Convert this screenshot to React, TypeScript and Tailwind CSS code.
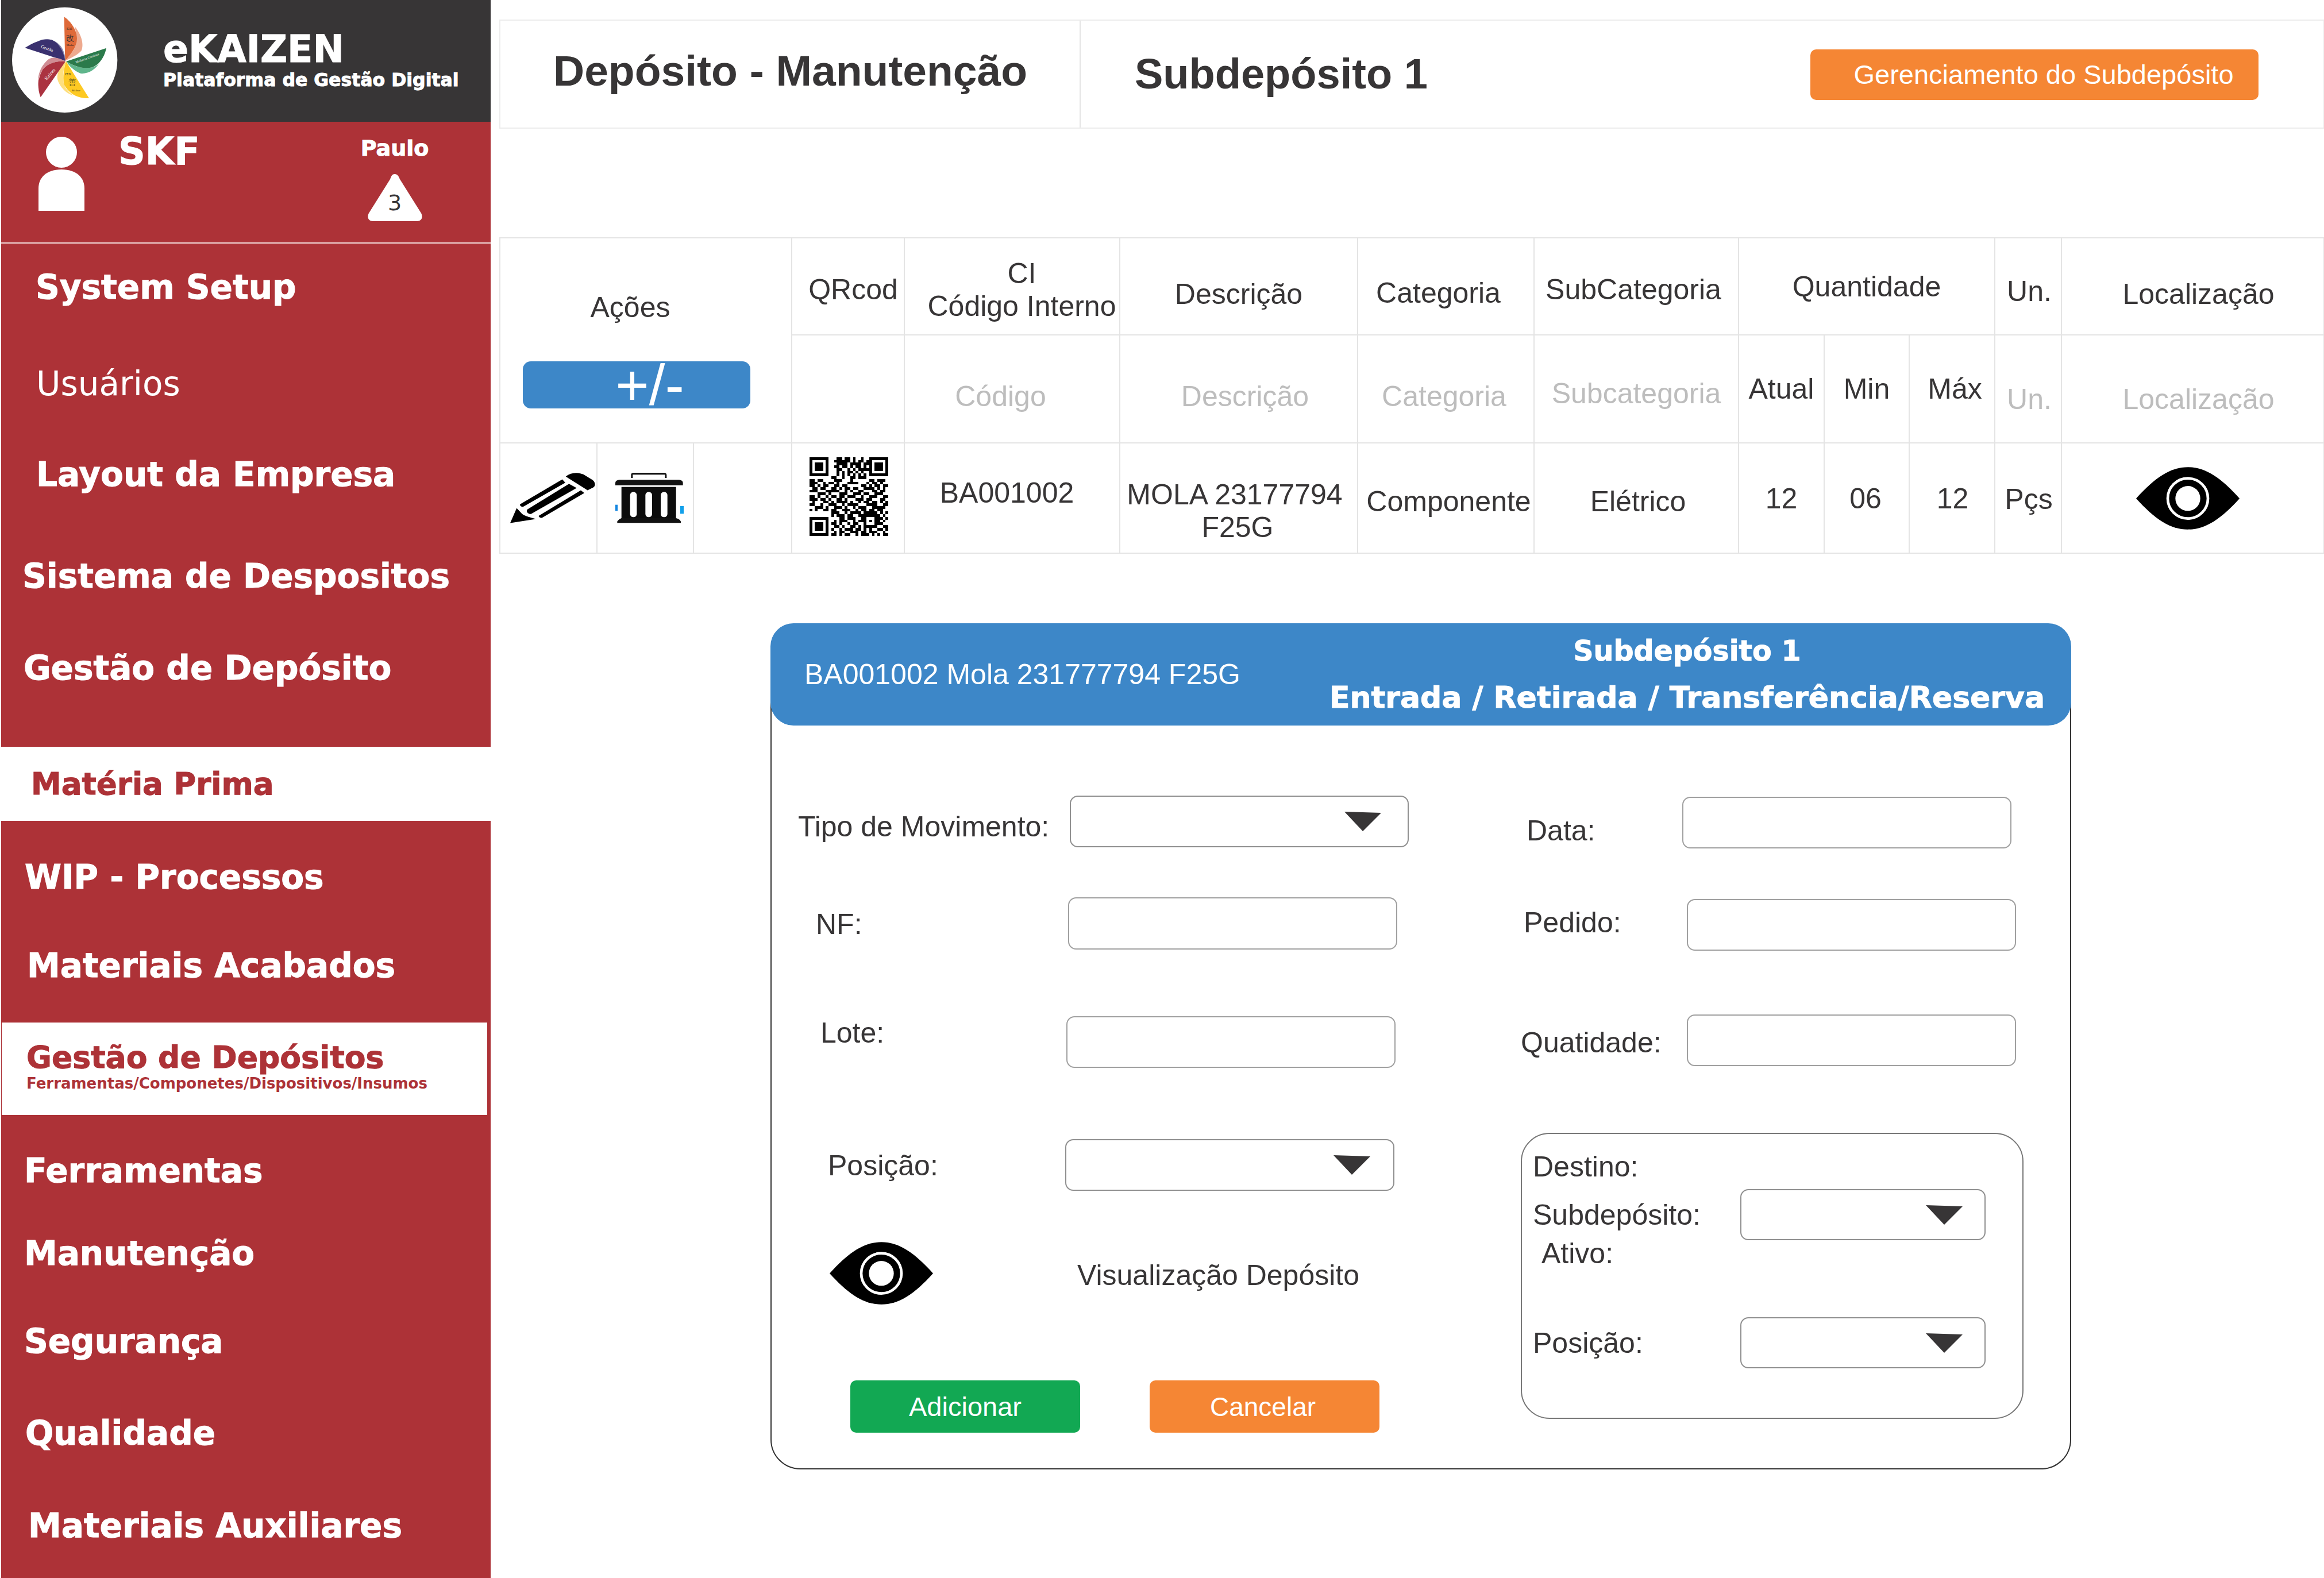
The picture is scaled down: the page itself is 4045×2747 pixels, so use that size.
import React from 'react';

const QR = [
  '00000000001101101001001000000',
  '00000000011111101011010000000',
  '00000000001111011110110000000',
  '00000000011011010110100000000',
  '00000000001100101011110000000',
  '00000000001010110101000000000',
  '00000000001010101010100000000',
  '00000000110010011011100000000',
  '11011000011100010000001101110',
  '11100101101000111100010110100',
  '11010110011011000001101011011',
  '01101100110101101100111101010',
  '11100011111001010011000110110',
  '00011101000111001110110011100',
  '11010010110110111001001110011',
  '11101101001101000111011000110',
  '01000110101111010010110110101',
  '11001001110010111100011110011',
  '00111010011101001011100111110',
  '10100110110011100101101101100',
  '00000000111001011110111110101',
  '00000000101110110011111111010',
  '00000000000110111001100011101',
  '00000000010111001011101011010',
  '00000000110100101100100011100',
  '00000000011010011010111110011',
  '00000000100101110110101001101',
  '00000000010110011101101110010',
  '00000000110101100101110101011',
];

const Finder = ({ x, y }: { x: number; y: number }) => (
  <g>
    <rect x={x} y={y} width={7} height={7} fill="#000" />
    <rect x={x + 1} y={y + 1} width={5} height={5} fill="#fff" />
    <rect x={x + 2} y={y + 2} width={3} height={3} fill="#000" />
  </g>
);

const QrCode = () => (
  <svg viewBox="0 0 29 29" className="w-[137px] h-[137px]" shapeRendering="crispEdges">
    <rect width={29} height={29} fill="#fff" />
    {QR.map((row, y) =>
      row.split('').map((c, x) => (c === '1' ? <rect key={`${x}-${y}`} x={x} y={y} width={1} height={1} fill="#000" /> : null)),
    )}
    <Finder x={0} y={0} />
    <Finder x={22} y={0} />
    <Finder x={0} y={22} />
  </svg>
);

const Logo = () => (
  <svg viewBox="0 0 630 630" className="ml-[8px] w-[210px] h-[210px] shrink-0">
    <circle cx={308} cy={310} r={275} fill="#fff" />
    <path d="M360 135C395 175 410 230 395 262C375 285 340 300 310 315C340 280 370 250 372 190Z" fill="#eeaa8f" />
    <path d="M305 85C350 115 375 170 372 200C370 250 330 290 310 315Z" fill="#df6a39" />
    <path d="M170 212C210 190 270 205 295 250C310 280 312 300 310 315C300 270 270 215 170 212Z" fill="#8a87ad" />
    <path d="M100 247C150 215 200 195 240 205C285 225 305 280 310 315Z" fill="#3a316f" />
    <path d="M495 315C470 365 425 385 390 380C360 370 330 340 315 318C350 340 395 355 430 352C465 350 485 335 495 315Z" fill="#5fb58b" />
    <path d="M525 248C515 300 480 350 430 352C390 355 345 335 315 318Z" fill="#2b7a4b" />
    <path d="M355 495C320 490 280 450 270 410C265 370 295 335 315 318C300 360 295 400 305 440C315 465 335 485 355 495Z" fill="#fedf7e" />
    <path d="M435 510C390 510 340 500 305 440C295 400 305 350 315 318Z" fill="#fdc923" />
    <path d="M172 455C160 400 180 340 225 305C255 290 290 305 312 318C280 315 220 320 190 365C170 395 168 425 172 455Z" fill="#d08d94" />
    <path d="M182 505C165 460 165 410 190 365C220 320 280 315 312 318Z" fill="#ab3340" />
    <g className="font-['Liberation_Serif',serif] [-webkit-text-stroke:0]">
      <text x={318} y={154} fontSize={16} fill="#222">KAI</text>
      <text x={316} y={210} fontSize={42} fill="#333" fontWeight={400}>改</text>
      <text x={317} y={237} fontSize={15} fill="#222">Mudar</text>
      <text x={182} y={246} fontSize={24} fill="#fff" transform="rotate(20 182 246)">Gestão</text>
      <text x={367} y={328} fontSize={17} fill="#fff" transform="rotate(-20 367 328)">Melhoria Contínua</text>
      <text x={308} y={389} fontSize={16} fill="#222">ZEN</text>
      <text x={326} y={440} fontSize={42} fill="#6b5a1a">善</text>
      <text x={345} y={473} fontSize={15} fill="#222">Melhor</text>
      <text x={214} y={417} fontSize={25} fill="#fff" transform="rotate(-50 214 417)">Kaizen</text>
    </g>
  </svg>
);

const UserIcon = () => (
  <svg viewBox="0 0 82 130" className="w-[82px] h-[130px] shrink-0" fill="#fff">
    <ellipse cx={41} cy={27} rx={27} ry={27} />
    <path d="M1 129V90C1 72 14 57 41 57C68 57 81 72 81 90V129Z" />
  </svg>
);

const Pencil = () => (
  <svg viewBox="25 115 450 275" className="w-[150px] h-[92px]" fill="#000">
    <path d="M318 140C345 118 385 115 415 132L458 158C474 170 474 190 462 197L432 212Z" />
    <path d="M300 155L316 172L98 297C88 302 76 292 80 285Z" />
    <path d="M335 178L375 200L138 335C122 340 108 322 118 312Z" />
    <path d="M397 212L415 226L195 355C184 358 174 350 178 345Z" />
    <path d="M62 305L85 330C95 342 110 348 162 362L28 383Z" />
  </svg>
);

const Trash = () => (
  <svg viewBox="570 115 360 270" className="w-[120px] h-[90px]">
    <path d="M655 145V128C655 122 660 118 668 118H828C836 118 841 122 841 130V145H832V128H664V145Z" fill="#111" />
    <path d="M573 172C573 160 585 155 600 155H900C915 155 926 160 926 172V183H573Z" fill="#111" />
    <rect x={605} y={192} width={285} height={165} fill="#0c0c0c" />
    <path d="M583 372C590 362 600 357 605 355H890C900 357 910 362 915 372V380H583Z" fill="#111" />
    <rect x={650} y={218} width={35} height={132} rx={17} fill="#fff" />
    <rect x={730} y={218} width={35} height={132} rx={17} fill="#fff" />
    <rect x={810} y={218} width={35} height={132} rx={17} fill="#fff" />
    <rect x={573} y={285} width={12} height={32} fill="#1486e0" />
    <rect x={912} y={292} width={18} height={40} fill="#12a0ea" />
  </svg>
);

const Eye = () => (
  <svg viewBox="72 65 540 325" className="w-[180px] h-[111px] shrink-0">
    <path d="M72 228C170 120 250 65 342 65C434 65 514 120 612 228C514 336 434 390 342 390C250 390 170 336 72 228Z" fill="#000" />
    <circle cx={342} cy={228} r={105} fill="none" stroke="#fff" strokeWidth={14} />
    <circle cx={342} cy={228} r={65} fill="#fff" />
  </svg>
);

const Cell = ({ className = '', children }: { className?: string; children?: React.ReactNode }) => (
  <div className={`flex items-center justify-center text-center whitespace-nowrap border-r-2 border-b-2 border-[#e4e4e4] ${className}`}>
    {children}
  </div>
);

const Select = ({ className = 'pr-[38px]' }: { className?: string }) => (
  <div className={`h-full w-full rounded-[14px] border-2 border-[#8f8f8f] flex items-center justify-end ${className}`}>
    <svg viewBox="0 0 64 34" className="w-[64px] h-[34px]">
      <polygon points="0,0 64,2 32,34" fill="#373536" />
    </svg>
  </div>
);

const Input = () => <div className="h-full w-full rounded-[14px] border-2 border-[#a0a0a0]" />;

const NavItem = ({ className, children }: { className: string; children: React.ReactNode }) => (
  <div className={`flex items-center font-bold text-[58px] text-white whitespace-nowrap ${className}`}>{children}</div>
);

const Sidebar = () => (
  <aside className="ml-[2px] w-[852px] h-full shrink-0 flex flex-col bg-[#ad3237] font-['DejaVu_Sans',sans-serif] [-webkit-text-stroke:1px_currentColor]">
    <div className="h-[212px] bg-[#373536] flex items-center text-white whitespace-nowrap">
      <Logo />
      <div className="ml-[64px] flex flex-col font-bold">
        <span className="text-[65px] leading-[72px] -mt-[4px]">eKAIZEN</span>
        <span className="text-[31.5px] leading-[40px] -mt-[3px]">Plataforma de Gestão Digital</span>
      </div>
    </div>
    <div className="h-[212px] flex text-white border-b-2 border-[#f3dcdc]">
      <div className="ml-[64px] mt-[26px]">
        <UserIcon />
      </div>
      <div className="ml-[58px] mt-[12px] text-[65px] leading-[80px] font-bold w-[423px]">SKF</div>
      <div className="flex flex-col items-center mt-[23px] w-[116px]">
        <span className="text-[38px] leading-[46px] font-bold">Paulo</span>
        <div className="relative mt-[22px] w-[95px] h-[82px]">
          <svg viewBox="0 0 95 82" className="w-[95px] h-[82px]">
            <path d="M47 0C52 0 54 4 56 9L93 68C97 76 93 82 86 82H9C2 82 -2 76 2 68L39 9C41 4 42 0 47 0Z" fill="#fff" />
          </svg>
          <span className="absolute inset-x-0 top-[25px] text-center text-[38px] leading-[50px] text-[#373536] [-webkit-text-stroke:0]">3</span>
        </div>
      </div>
    </div>
    <NavItem className="h-[152px] pl-[60px]">System Setup</NavItem>
    <NavItem className="h-[184px] pl-[61px] !font-normal [-webkit-text-stroke:0]">Usuários</NavItem>
    <NavItem className="h-[132px] pl-[61px]">Layout da Empresa</NavItem>
    <NavItem className="h-[222px] pl-[37px]">Sistema de Despositos</NavItem>
    <NavItem className="h-[98px] pl-[39px]">Gestão de Depósito</NavItem>
    <div className="h-[88px]" />
    <div className="h-[129px] bg-white flex items-center pl-[52px] text-[53px] font-bold text-[#ad3237]">Matéria Prima</div>
    <NavItem className="h-[196px] pl-[41px]">WIP - Processos</NavItem>
    <NavItem className="h-[112px] pl-[45px]">Materiais Acabados</NavItem>
    <div className="h-[43px]" />
    <div className="h-[161px] mr-[6px] ml-[1px] bg-white pl-[43px] pt-[28px] text-[#ad3237] font-bold whitespace-nowrap">
      <div className="text-[53.5px] leading-[66px]">Gestão de Depósitos</div>
      <div className="text-[26px] leading-[30px] -mt-[3px] [-webkit-text-stroke:0]">Ferramentas/Componetes/Dispositivos/Insumos</div>
    </div>
    <NavItem className="h-[194px] pl-[40px]">Ferramentas</NavItem>
    <NavItem className="h-[94px] pl-[40px]">Manutenção</NavItem>
    <NavItem className="h-[212px] pl-[40px]">Segurança</NavItem>
    <NavItem className="h-[108px] pl-[42px]">Qualidade</NavItem>
    <NavItem className="h-[196px] pl-[47px] pt-[18px]">Materiais Auxiliares</NavItem>
  </aside>
);

const TopBar = () => (
  <div className="mt-[34px] h-[190px] flex border-2 border-[#ececec] text-[75px] font-bold whitespace-nowrap">
    <div className="w-[1010px] h-full pl-[92px] flex items-center pb-[12px] border-r-2 border-[#e4e4e4]">Depósito - Manutenção</div>
    <div className="flex-1 flex items-center">
      <span className="ml-[94px] text-[74px]">Subdepósito 1</span>
      <button className="ml-auto mr-[113px] mt-[2px] w-[780px] h-[88px] rounded-[10px] bg-[#f58634] text-white text-[47px] font-normal pl-[32px]">
        Gerenciamento do Subdepósito
      </button>
    </div>
  </div>
);

const DataTable = () => (
  <div className="mt-[189px] grid grid-cols-[508px_196px_375px_414px_307px_356px_149px_148px_149px_116px_457px] grid-rows-[169px_188px_192px] border-t-2 border-l-2 border-[#e4e4e4] leading-[57px]">
    <div className="row-span-2 flex flex-col border-r-2 border-b-2 border-[#e4e4e4]">
      <div className="pt-[92px] pr-[54px] text-center">Ações</div>
      <button className="ml-[39px] mt-[65px] w-[396px] h-[82px] rounded-[14px] bg-[#3d87c8] text-white text-[100px] leading-[82px] pl-[46px]">+/-</button>
    </div>
    <Cell className="pl-[18px] pt-[12px]">QRcod</Cell>
    <Cell className="pl-[34px] pt-[12px]">
      CI
      <br />
      Código Interno
    </Cell>
    <Cell className="pt-[28px]">Descrição</Cell>
    <Cell className="pr-[26px] pt-[24px]">Categoria</Cell>
    <Cell className="pr-[10px] pt-[12px]">SubCategoria</Cell>
    <Cell className="col-span-3 pt-[2px]">Quantidade</Cell>
    <Cell className="pl-[4px] pt-[18px]">Un.</Cell>
    <Cell className="pl-[20px] pt-[28px]">Localização</Cell>

    <Cell />
    <Cell className="pr-[40px] pt-[26px] text-[#bdbdbd]">Código</Cell>
    <Cell className="pl-[22px] pt-[26px] text-[#bdbdbd]">Descrição</Cell>
    <Cell className="pt-[26px] text-[#bdbdbd] pr-[6px]">Categoria</Cell>
    <Cell className="pt-[16px] text-[#bdbdbd]">Subcategoria</Cell>
    <Cell>Atual</Cell>
    <Cell>Min</Cell>
    <Cell className="pl-[10px]">Máx</Cell>
    <Cell className="pl-[4px] pt-[36px] text-[#bdbdbd]">Un.</Cell>
    <Cell className="pl-[20px] pt-[36px] text-[#bdbdbd]">Localização</Cell>

    <div className="grid grid-cols-3 border-r-2 border-b-2 border-[#e4e4e4]">
      <div className="flex items-center pl-[16px] border-r-2 border-[#e4e4e4]">
        <Pencil />
      </div>
      <div className="flex items-center pl-[30px] border-r-2 border-[#e4e4e4]">
        <Trash />
      </div>
      <div />
    </div>
    <Cell className="pl-[2px] pb-[6px]">
      <QrCode />
    </Cell>
    <Cell className="pr-[18px] pb-[18px]">BA001002</Cell>
    <Cell className="pr-[14px] pt-[46px]">
      <div>
        MOLA 23177794
        <div className="pl-[10px]">F25G</div>
      </div>
    </Cell>
    <Cell className="pl-[10px] pt-[12px]">Componente</Cell>
    <Cell className="pl-[6px] pt-[12px]">Elétrico</Cell>
    <Cell className="pt-[2px]">12</Cell>
    <Cell className="pr-[4px] pt-[2px]">06</Cell>
    <Cell className="pl-[2px] pt-[2px]">12</Cell>
    <Cell className="pl-[2px] pt-[4px]">Pçs</Cell>
    <Cell className="pr-[18px]">
      <Eye />
    </Cell>
  </div>
);

const MovementModal = () => (
  <div className="mt-[121px] ml-[472px] w-[2264px] h-[1473px] rounded-[52px] border-2 border-[#333333]">
    <div className="-mx-[2px] -mt-[2px] h-[178px] rounded-[40px] bg-[#3d87c8] text-white flex items-center whitespace-nowrap">
      <span className="ml-[59px]">BA001002 Mola 231777794 F25G</span>
      <div className="ml-auto mr-[46px] flex flex-col items-center font-['DejaVu_Sans',sans-serif] font-bold leading-[80px] [-webkit-text-stroke:1px_currentColor]">
        <span className="text-[49px]">Subdepósito 1</span>
        <span className="text-[52px]">Entrada / Retirada / Transferência/Reserva</span>
      </div>
    </div>
    <div className="flex">
      <div className="w-[1261px] shrink-0 flex flex-col">
        <div className="flex mt-[122px]">
          <div className="ml-[46px] w-[473px] mt-[25px]">Tipo de Movimento:</div>
          <div className="w-[590px] h-[90px]">
            <Select className="pr-[46px]" />
          </div>
        </div>
        <div className="flex mt-[87px]">
          <div className="ml-[77px] w-[439px] mt-[18px]">NF:</div>
          <div className="w-[573px] h-[91px]">
            <Input />
          </div>
        </div>
        <div className="flex mt-[116px]">
          <div className="ml-[85px] w-[428px]">Lote:</div>
          <div className="w-[573px] h-[90px]">
            <Input />
          </div>
        </div>
        <div className="flex mt-[124px]">
          <div className="ml-[98px] w-[413px] mt-[17px]">Posição:</div>
          <div className="w-[573px] h-[90px]">
            <Select className="pr-[40px]" />
          </div>
        </div>
        <div className="flex items-center mt-[88px]">
          <div className="ml-[101px]">
            <Eye />
          </div>
          <span className="ml-[251px] mt-[6px]">Visualização Depósito</span>
        </div>
        <div className="flex mt-[131px] ml-[137px] gap-[121px] text-[47px] text-white">
          <button className="w-[400px] h-[91px] rounded-[10px] bg-[#12a853]">Adicionar</button>
          <button className="w-[400px] h-[91px] rounded-[10px] bg-[#f58634] text-[46px] pr-[6px]">Cancelar</button>
        </div>
      </div>
      <div className="flex-1 flex flex-col">
        <div className="flex mt-[124px]">
          <div className="ml-[53px] w-[271px] mt-[30px]">Data:</div>
          <div className="w-[573px] h-[90px]">
            <Input />
          </div>
        </div>
        <div className="flex mt-[88px]">
          <div className="ml-[48px] w-[284px] mt-[12px]">Pedido:</div>
          <div className="w-[573px] h-[90px]">
            <Input />
          </div>
        </div>
        <div className="flex mt-[111px]">
          <div className="ml-[43px] w-[289px] mt-[20px]">Quatidade:</div>
          <div className="w-[573px] h-[90px]">
            <Input />
          </div>
        </div>
        <div className="mt-[116px] ml-[43px] w-[875px] h-[498px] rounded-[50px] border-2 border-[#777777] pl-[19px] pt-[28px]">
          <div>Destino:</div>
          <div className="flex mt-[10px]">
            <div className="w-[361px] mt-[16px]">Subdepósito:</div>
            <div className="w-[427px] h-[89px]">
              <Select />
            </div>
          </div>
          <div className="ml-[15px] -mt-[6px]">Ativo:</div>
          <div className="flex mt-[82px]">
            <div className="w-[361px] mt-[16px]">Posição:</div>
            <div className="w-[427px] h-[89px]">
              <Select />
            </div>
          </div>
        </div>
      </div>
    </div>
  </div>
);

const App: React.FC = () => (
  <div className="w-[4045px] h-[2747px] overflow-hidden flex bg-white text-[#373536] text-[50px] leading-[58px] font-['Liberation_Sans',sans-serif]">
    <Sidebar />
    <main className="flex-1 pl-[15px] flex flex-col">
      <TopBar />
      <DataTable />
      <MovementModal />
    </main>
  </div>
);

export default App;
